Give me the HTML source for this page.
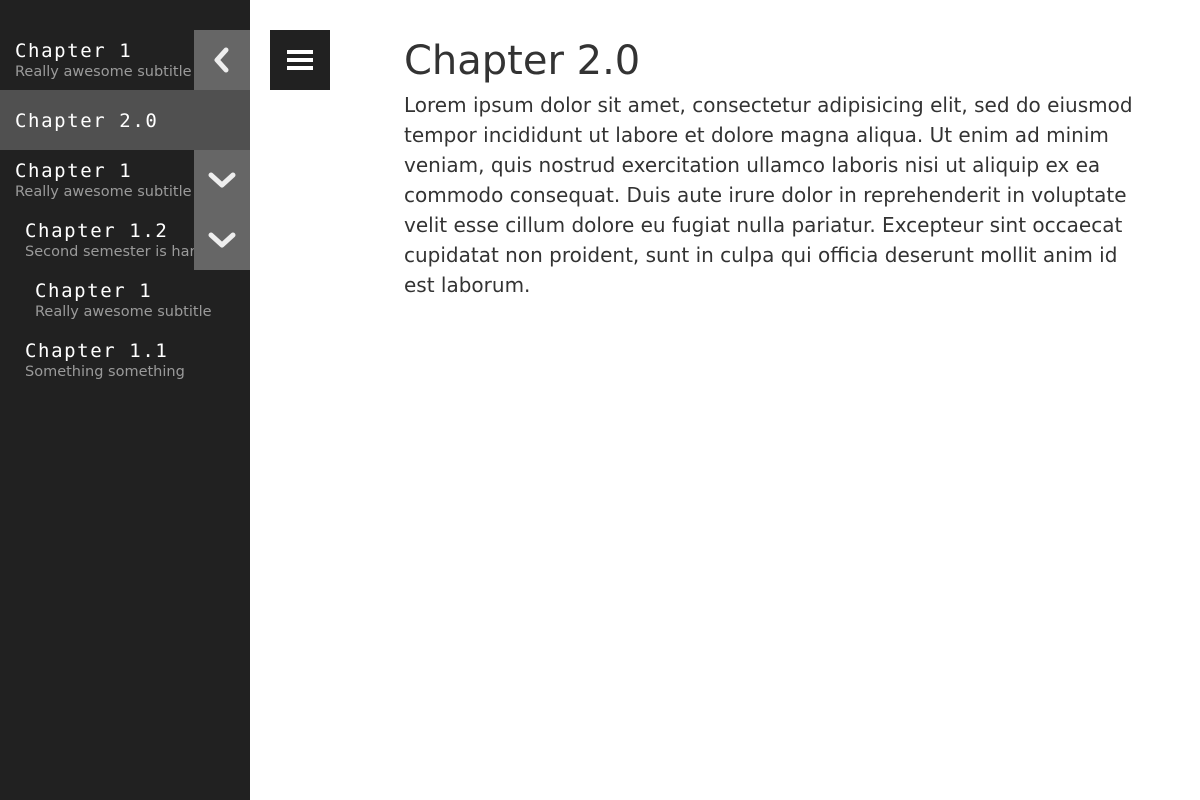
<!DOCTYPE html>
<html><head><style>
body{margin:0;width:1200px;height:800px;background:#fff;font-family:"DejaVu Sans",sans-serif;position:relative;overflow:hidden}
#side{position:absolute;left:0;top:0;width:250px;height:800px;background:#212121}
.item{position:absolute;left:0;width:250px;height:60px;overflow:hidden;white-space:nowrap}
.t{position:absolute;font-family:"DejaVu Sans Mono",monospace;font-size:19px;letter-spacing:1.6px;color:#fff;line-height:20px}
.s{position:absolute;font-size:14.5px;color:#9a9a9a;line-height:16px}
.btn{position:absolute;left:194px;width:56px;height:60px;background:#666;display:flex;align-items:center;justify-content:center}
#menu{position:absolute;left:270px;top:30px;width:60px;height:60px;background:#212121;display:flex;align-items:center;justify-content:center}
h1{position:absolute;left:404px;top:37px;margin:0;font-weight:normal;font-size:40px;color:#333;line-height:48px}
p{position:absolute;left:404px;top:90px;width:738px;margin:0;font-size:20px;line-height:30px;color:#333}
</style></head><body>
<div id="side">
 <div class="item" style="top:30px"><div class="t" style="left:15px;top:11px">Chapter 1</div><div class="s" style="left:15px;top:34px">Really awesome subtitle</div></div>
 <div class="item" style="top:90px;background:#505050"><div class="t" style="left:15px;top:21px">Chapter 2.0</div></div>
 <div class="item" style="top:150px"><div class="t" style="left:15px;top:11px">Chapter 1</div><div class="s" style="left:15px;top:34px">Really awesome subtitle</div></div>
 <div class="item" style="top:210px"><div class="t" style="left:25px;top:11px">Chapter 1.2</div><div class="s" style="left:25px;top:34px">Second semester is hard</div></div>
 <div class="item" style="top:270px"><div class="t" style="left:35px;top:11px">Chapter 1</div><div class="s" style="left:35px;top:34px">Really awesome subtitle</div></div>
 <div class="item" style="top:330px"><div class="t" style="left:25px;top:11px">Chapter 1.1</div><div class="s" style="left:25px;top:34px">Something something</div></div>
 <div class="btn" style="top:30px"><svg width="24" height="26" viewBox="0 0 24 26"><path d="M16 3 L7 13 L16 23" fill="none" stroke="#eee" stroke-width="5" stroke-linecap="round" stroke-linejoin="round"/></svg></div>
 <div class="btn" style="top:150px"><svg width="30" height="24" viewBox="0 0 30 24"><path d="M4 7 L15 17 L26 7" fill="none" stroke="#eee" stroke-width="5" stroke-linecap="round" stroke-linejoin="round"/></svg></div>
 <div class="btn" style="top:210px"><svg width="30" height="24" viewBox="0 0 30 24"><path d="M4 7 L15 17 L26 7" fill="none" stroke="#eee" stroke-width="5" stroke-linecap="round" stroke-linejoin="round"/></svg></div>
</div>
<div id="menu"><svg width="26" height="22" viewBox="0 0 26 22"><rect x="0" y="1" width="26" height="4" fill="#fff"/><rect x="0" y="9" width="26" height="4" fill="#fff"/><rect x="0" y="17" width="26" height="4" fill="#fff"/></svg></div>
<h1>Chapter 2.0</h1>
<p>Lorem ipsum dolor sit amet, consectetur adipisicing elit, sed do eiusmod tempor incididunt ut labore et dolore magna aliqua. Ut enim ad minim veniam, quis nostrud exercitation ullamco laboris nisi ut aliquip ex ea commodo consequat. Duis aute irure dolor in reprehenderit in voluptate velit esse cillum dolore eu fugiat nulla pariatur. Excepteur sint occaecat cupidatat non proident, sunt in culpa qui officia deserunt mollit anim id est laborum.</p>
</body></html>
